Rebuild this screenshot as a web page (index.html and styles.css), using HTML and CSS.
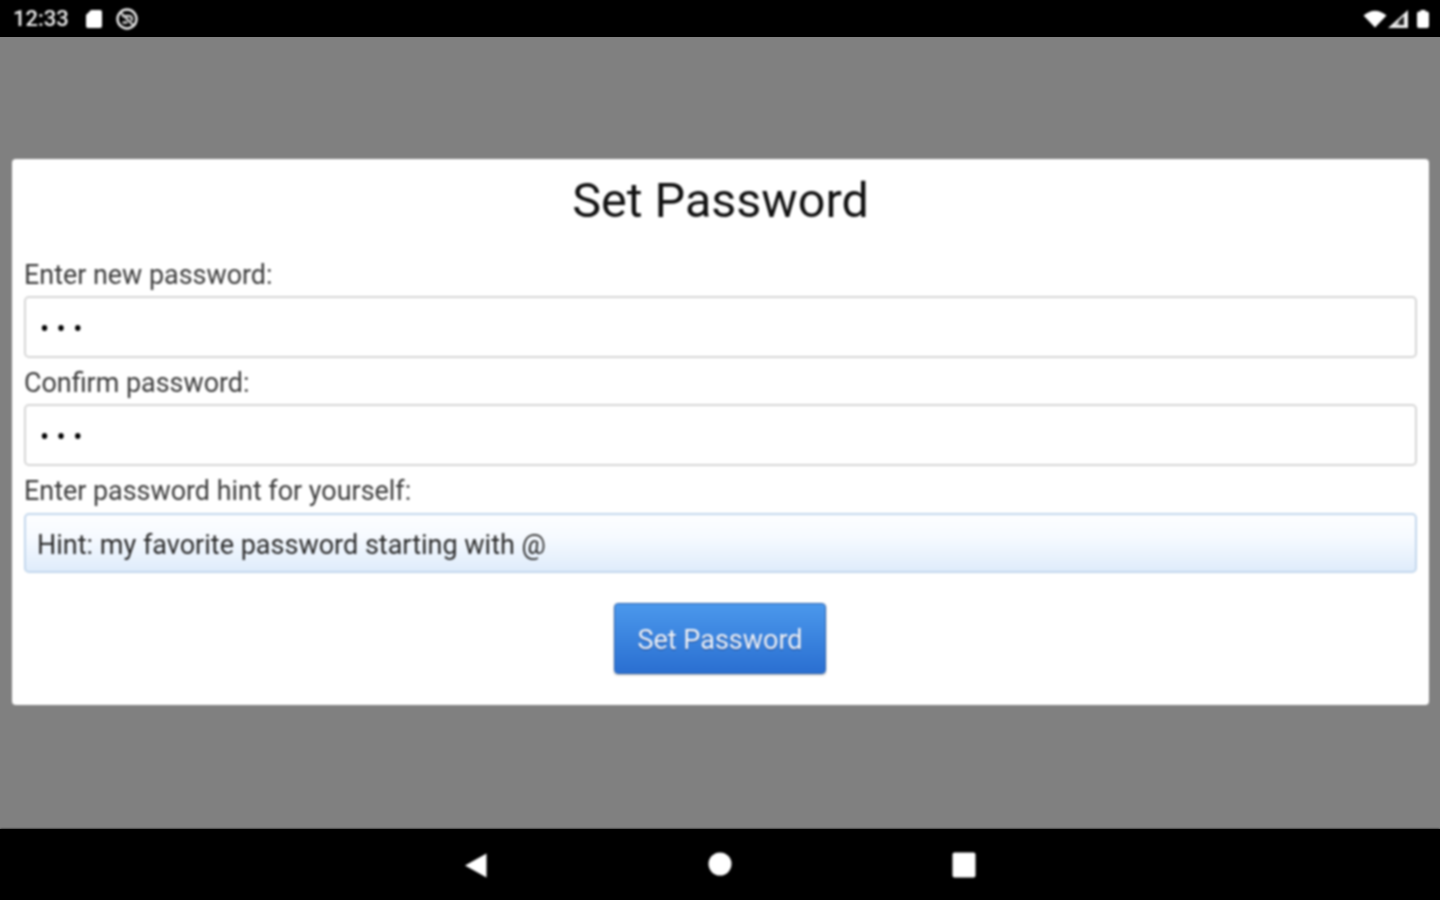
FILE: index.html
```html
<!DOCTYPE html>
<html lang="en">
<head>
<meta charset="utf-8">
<title>Set Password</title>
<link rel="stylesheet" href="styles.css">
</head>
<body>
<div class="app">
  <header class="status-bar">
    <div class="status-left soft">
      <span class="clock">12:33</span>
      <svg class="ico-sd" viewBox="0 0 18 20" width="18" height="20"><path d="M6 1h9a2 2 0 0 1 2 2v14a2 2 0 0 1-2 2H3a2 2 0 0 1-2-2V6z" fill="#fff"/></svg>
      <svg class="ico-sync" viewBox="0 0 24 24" width="24" height="24"><circle cx="12" cy="12" r="9.500" fill="none" stroke="#eee" stroke-width="2.400"/><path d="M7 9h7.500a2.500 2.500 0 0 1 1.500 4.500M6 6l12 12M7.500 15.500h5" fill="none" stroke="#ccc" stroke-width="2.400"/></svg>
    </div>
    <div class="status-right soft">
      <svg class="ico-wifi" viewBox="0 0 24 18" width="24" height="18"><path d="M0.500 5.500Q12-4 23.500 5.500L12 17.500z" fill="#fff"/></svg>
      <svg class="ico-signal" viewBox="0 0 20 18" width="20" height="18"><path d="M0 18L20 0v18z" fill="#eee"/><path d="M10.500 11l5.500-5v9h-5.500z" fill="#222"/><path d="M7 15l3.500-3.500V15z" fill="#999"/></svg>
      <svg class="ico-battery" viewBox="0 0 14 20" width="14" height="20"><path d="M4.500 1h5v1.500h2a2 2 0 0 1 1.500 2V17a2 2 0 0 1-2 2H3a2 2 0 0 1-2-2V4.500a2 2 0 0 1 2-2h1.500z" fill="#fff"/></svg>
    </div>
  </header>

  <main class="scrim">
    <form class="dialog soft">
      <h1 class="dialog-title">Set Password</h1>
      <label class="field-label" for="new-pass">Enter new password:</label>
      <input class="field field-secret" id="new-pass" type="password" value="abc">
      <label class="field-label" for="confirm-pass">Confirm password:</label>
      <input class="field field-secret" id="confirm-pass" type="password" value="abc">
      <label class="field-label field-label-hint" for="hint">Enter password hint for yourself:</label>
      <input class="field field-hint" id="hint" type="text" value="Hint: my favorite password starting with @">
      <div class="actions">
        <button class="submit" type="button">Set Password</button>
      </div>
    </form>
  </main>

  <footer class="nav-bar soft">
    <svg class="nav-back" viewBox="0 0 24 26" width="24" height="26"><path d="M1 13.500L22.500 1.500v24z" fill="#fff"/></svg>
    <svg class="nav-home" viewBox="0 0 24 24" width="24" height="24"><circle cx="12" cy="12" r="11.500" fill="#fff"/></svg>
    <svg class="nav-recent" viewBox="0 0 24 26" width="24" height="26"><rect x="0.500" y="0.500" width="23" height="25" rx="2" fill="#fff"/></svg>
  </footer>
</div>
</body>
</html>
```

FILE: styles.css
```css
* {
  box-sizing: border-box;
}

html,
body {
  margin: 0;
  padding: 0;
  background: #000;
}

.app {
  display: flex;
  flex-direction: column;
  width: 1440px;
  height: 900px;
  overflow: hidden;
  font-family: Roboto, "Liberation Sans", sans-serif;
}

.soft {
  filter: blur(0.8px);
}

.status-bar {
  flex: 0 0 37px;
  display: flex;
  align-items: center;
  justify-content: space-between;
  padding: 0 10px 0 13px;
  background: #000;
  color: #fff;
}

.status-left,
.status-right {
  display: flex;
  align-items: center;
}

.clock {
  font-size: 22px;
  font-weight: 500;
  margin-right: 16px;
  color: #eee;
}

.ico-sd {
  margin-right: 12px;
}

.ico-wifi {
  margin-right: 1px;
}

.ico-signal {
  margin-right: 8px;
}

.scrim {
  flex: 1;
  display: flex;
  align-items: center;
  padding: 0 11px 2px 12px;
  background: #808080;
}

.dialog {
  width: 100%;
  height: 546px;
  padding: 13px 12px 0;
  background: #fff;
  border-radius: 4px;
  display: flex;
  flex-direction: column;
}

.dialog-title {
  margin: 0 0 29px;
  height: 58px;
  font-size: 48.500px;
  line-height: 58px;
  font-weight: 400;
  text-align: center;
  color: #111;
}

.field-label {
  display: block;
  height: 37px;
  padding-top: 1px;
  font-size: 26.900px;
  line-height: 30px;
  color: #3c3c3c;
}

.field-label-hint {
  height: 38px;
}

.field {
  display: block;
  width: 100%;
  height: 62px;
  margin: 0 0 9px;
  padding: 3px 11px 0;
  font-family: inherit;
  font-size: 27px;
  color: #2c2c2c;
  background: #fff;
  border: 2px solid #d6d6d6;
  border-radius: 5px;
  outline: none;
}

.field-secret {
  padding-left: 14px;
  letter-spacing: 7.500px;
  color: #000;
}

.field-hint {
  height: 60px;
  border-color: #c3d7ec;
  background: linear-gradient(#fdfeff, #f6faff 40%, #dfecfb);
}

.actions {
  display: flex;
  justify-content: center;
  margin-top: 21px;
  padding-right: 1px;
}

.submit {
  width: 212px;
  height: 71px;
  padding: 2px 0 0;
  font-family: inherit;
  font-size: 27px;
  color: #f2f5fa;
  background: linear-gradient(#4b98ec, #2a6fd1);
  border: 1px solid #2a62b0;
  border-radius: 4px;
  box-shadow: 0 1px 2px rgba(0, 0, 0, 0.3);
  text-shadow: 0 1px 1px rgba(0, 0, 50, 0.45);
}

.nav-bar {
  flex: 0 0 71px;
  display: flex;
  align-items: center;
  justify-content: center;
  gap: 220px;
  background: #000;
}

.nav-home {
  margin-bottom: 1px;
}
```
